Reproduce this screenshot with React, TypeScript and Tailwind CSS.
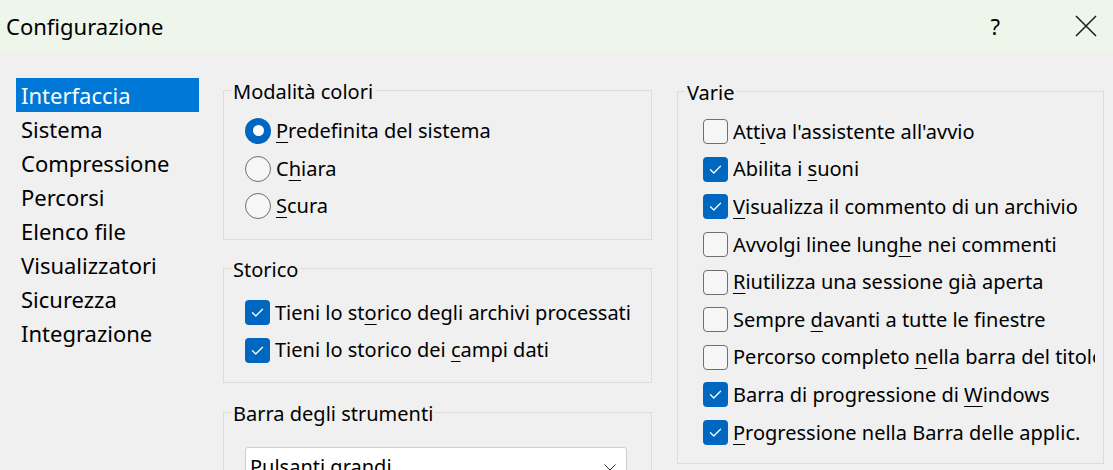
import React from "react";

type Item = { pre: string; key: string; post: string; checked: boolean };

const navItems = [
  "Interfaccia",
  "Sistema",
  "Compressione",
  "Percorsi",
  "Elenco file",
  "Visualizzatori",
  "Sicurezza",
  "Integrazione",
];

const radios = [
  { pre: "", key: "P", post: "redefinita del sistema", checked: true },
  { pre: "C", key: "h", post: "iara", checked: false },
  { pre: "", key: "S", post: "cura", checked: false },
];

const storico: Item[] = [
  { pre: "Tieni lo st", key: "o", post: "rico degli archivi processati", checked: true },
  { pre: "Tieni lo storico dei ", key: "c", post: "ampi dati", checked: true },
];

const varie: Item[] = [
  { pre: "Att", key: "i", post: "va l'assistente all'avvio", checked: false },
  { pre: "Abilita i ", key: "s", post: "uoni", checked: true },
  { pre: "", key: "V", post: "isualizza il commento di un archivio", checked: true },
  { pre: "Avvolgi linee lung", key: "h", post: "e nei commenti", checked: false },
  { pre: "", key: "R", post: "iutilizza una sessione già aperta", checked: false },
  { pre: "Sempre ", key: "d", post: "avanti a tutte le finestre", checked: false },
  { pre: "Percorso completo ", key: "n", post: "ella barra del titolo", checked: false },
  { pre: "Barra di progressione di ", key: "W", post: "indows", checked: true },
  { pre: "", key: "P", post: "rogressione nella Barra delle applic.", checked: true },
];

function Label({ pre, k, post }: { pre: string; k: string; post: string }) {
  return (
    <span className="min-w-0 overflow-hidden whitespace-nowrap">
      {pre}
      <span className="underline decoration-1 underline-offset-[4px]">{k}</span>
      {post}
    </span>
  );
}

function CheckBox({ checked }: { checked: boolean }) {
  if (checked) {
    return (
      <span className="flex h-[25px] w-[25px] shrink-0 items-center justify-center rounded-[4px] bg-[#0067c0]">
        <svg width="25" height="25" viewBox="0 0 25 25" fill="none">
          <path d="M7.5 12.8 L10.8 16 L17.5 9.3" stroke="white" strokeWidth="1.3" strokeLinecap="round" strokeLinejoin="round" />
        </svg>
      </span>
    );
  }
  return <span className="h-[25px] w-[25px] shrink-0 rounded-[4px] border border-[#6f6f6f] bg-[#f6f6f6]" />;
}

function Radio({ checked }: { checked: boolean }) {
  if (checked) {
    return (
      <span className="flex h-[26px] w-[26px] shrink-0 items-center justify-center rounded-full bg-[#0067c0]">
        <span className="h-[11px] w-[11px] rounded-full bg-white" />
      </span>
    );
  }
  return <span className="h-[26px] w-[26px] shrink-0 rounded-full border border-[#6f6f6f] bg-[#f6f6f6]" />;
}

function Group({ title, className, children }: { title: string; className: string; children: React.ReactNode }) {
  return (
    <fieldset className={"min-w-0 border border-[#dcdcdc] text-[20px] " + className}>
      <legend className="ml-[7px] px-[2px] pt-[3px] leading-[23px]">{title}</legend>
      {children}
    </fieldset>
  );
}

export default function App() {
  return (
    <div className="h-[470px] w-[1113px] overflow-hidden bg-[#f0f0f0] font-['Noto_Sans',sans-serif] text-[22px] text-black">
      <div className="flex h-[52px] items-center bg-[#eef5ea]">
        <span className="ml-[6px] flex-1 leading-none">Configurazione</span>
        <span className="mr-[75px] leading-none">?</span>
        <svg width="22" height="22" viewBox="0 0 22 22" className="mr-[16px]">
          <path d="M1 1 L21 21 M21 1 L1 21" stroke="#1a1a1a" strokeWidth="1.5" />
        </svg>
      </div>

      <div className="flex pl-[16px] pt-[25px]">
        <div className="mt-[1px] w-[183px]">
          {navItems.map((n, i) => (
            <div
              key={n}
              className={
                "h-[34px] pl-[5px] leading-[34px] " + (i === 0 ? "bg-[#0078d7] text-white" : "")
              }
            >
              {n}
            </div>
          ))}
        </div>

        <div className="ml-[24px] flex w-[429px] flex-col">
          <Group title="Modalità colori" className="pb-[14px] pt-[9px]">
            {radios.map((r) => (
              <div key={r.post} className="flex h-[37.7px] items-center gap-[5px] pl-[21px]">
                <Radio checked={r.checked} />
                <Label pre={r.pre} k={r.key} post={r.post} />
              </div>
            ))}
          </Group>

          <Group title="Storico" className="mt-[15px] pb-[13px] pt-[13px]">
            {storico.map((r) => (
              <div key={r.post} className="flex h-[37.5px] items-center gap-[5px] pl-[21px]">
                <CheckBox checked={r.checked} />
                <Label pre={r.pre} k={r.key} post={r.post} />
              </div>
            ))}
          </Group>

          <Group title="Barra degli strumenti" className="mt-[16px] pb-[20px] pt-[22px]">
            <div className="ml-[21px] mr-[24px] flex h-[40px] items-center justify-between rounded-[3px] border border-[#cfcfcf] bg-white pl-[4px] pr-[10px]">
              <span className="leading-none">Pulsanti grandi</span>
              <svg width="12" height="7" viewBox="0 0 12 7" fill="none">
                <path d="M0.5 0.5 L6 6 L11.5 0.5" stroke="#333" strokeWidth="1" />
              </svg>
            </div>
          </Group>
        </div>

        <div className="ml-[25px] mt-[1px] w-[427px]">
          <Group title="Varie" className="pb-[12px] pt-[9px]">
            {varie.map((r) => (
              <div key={r.post} className="flex h-[37.6px] items-center gap-[5px] pl-[25px] pr-[8px]">
                <CheckBox checked={r.checked} />
                <Label pre={r.pre} k={r.key} post={r.post} />
              </div>
            ))}
          </Group>
        </div>
      </div>
    </div>
  );
}
